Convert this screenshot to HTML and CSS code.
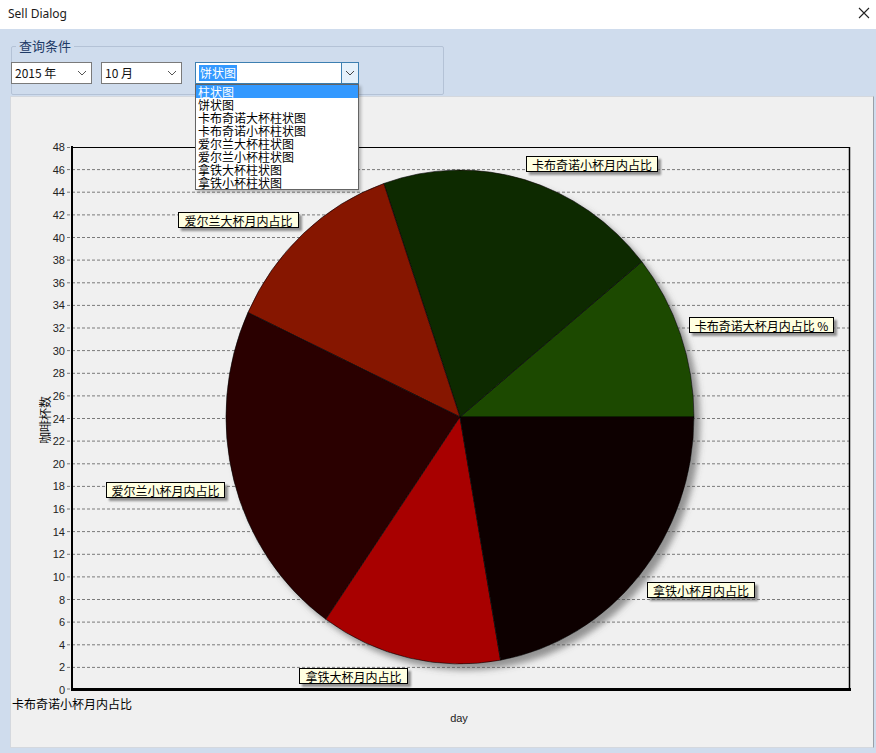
FILE: index.html
```html
<!DOCTYPE html>
<html>
<head>
<meta charset="utf-8">
<title>Sell Dialog</title>
<link rel="stylesheet" href="styles.css">
</head>
<body>
<div class="window">
  <div class="titlebar">
    <span class="title">Sell Dialog</span>
    <svg class="close" width="12" height="12" viewBox="0 0 12 12"><path d="M1 1 L11 11 M11 1 L1 11" stroke="#222" stroke-width="1.1" fill="none"/></svg>
  </div>
  <fieldset class="query">
    <legend class="legend">查询条件</legend>
    <div class="row">
      <div class="combo c-year"><span class="ctext">2015 年</span><svg class="chev" width="10" height="6" viewBox="0 0 10 6"><path d="M1 1 L5 5 L9 1" stroke="#555" fill="none"/></svg></div>
      <div class="combo c-month"><span class="ctext">10 月</span><svg class="chev" width="10" height="6" viewBox="0 0 10 6"><path d="M1 1 L5 5 L9 1" stroke="#555" fill="none"/></svg></div>
      <div class="combo c-type">
        <span class="ctext"><span class="sel">饼状图</span></span>
        <span class="btn"><svg width="10" height="6" viewBox="0 0 10 6"><path d="M1 1 L5 5 L9 1" stroke="#444" fill="none"/></svg></span>
        <ul class="list">
          <li class="hl">柱状图</li>
          <li>饼状图</li>
          <li>卡布奇诺大杯柱状图</li>
          <li>卡布奇诺小杯柱状图</li>
          <li>爱尔兰大杯柱状图</li>
          <li>爱尔兰小杯柱状图</li>
          <li>拿铁大杯柱状图</li>
          <li>拿铁小杯柱状图</li>
        </ul>
      </div>
    </div>
  </fieldset>
  <div class="panel">
    <svg class="chart" width="862" height="650" viewBox="11 97 862 650">
      <defs>
        <filter id="pshadow" x="-10%" y="-10%" width="130%" height="130%">
          <feDropShadow dx="6" dy="6" stdDeviation="3" flood-color="#555" flood-opacity="0.6"/>
        </filter>
        <filter id="lshadow" x="-10%" y="-30%" width="130%" height="180%">
          <feDropShadow dx="3" dy="3" stdDeviation="1" flood-color="#666" flood-opacity="0.7"/>
        </filter>
      </defs>
      <g class="grid">
        <line x1="67" x2="849" y1="169.6" y2="169.6"/>
        <line x1="67" x2="849" y1="192.2" y2="192.2"/>
        <line x1="67" x2="849" y1="214.9" y2="214.9"/>
        <line x1="67" x2="849" y1="237.5" y2="237.5"/>
        <line x1="67" x2="849" y1="260.1" y2="260.1"/>
        <line x1="67" x2="849" y1="282.8" y2="282.8"/>
        <line x1="67" x2="849" y1="305.4" y2="305.4"/>
        <line x1="67" x2="849" y1="328" y2="328"/>
        <line x1="67" x2="849" y1="350.6" y2="350.6"/>
        <line x1="67" x2="849" y1="373.3" y2="373.3"/>
        <line x1="67" x2="849" y1="395.9" y2="395.9"/>
        <line x1="67" x2="849" y1="418.5" y2="418.5"/>
        <line x1="67" x2="849" y1="441.1" y2="441.1"/>
        <line x1="67" x2="849" y1="463.8" y2="463.8"/>
        <line x1="67" x2="849" y1="486.4" y2="486.4"/>
        <line x1="67" x2="849" y1="509" y2="509"/>
        <line x1="67" x2="849" y1="531.6" y2="531.6"/>
        <line x1="67" x2="849" y1="554.3" y2="554.3"/>
        <line x1="67" x2="849" y1="576.9" y2="576.9"/>
        <line x1="67" x2="849" y1="599.5" y2="599.5"/>
        <line x1="67" x2="849" y1="622.1" y2="622.1"/>
        <line x1="67" x2="849" y1="644.8" y2="644.8"/>
        <line x1="67" x2="849" y1="667.4" y2="667.4"/>
        <line x1="67" x2="72" y1="147.5" y2="147.5"/>
        <line x1="67" x2="72" y1="689" y2="689"/>
      </g>
      <g class="ticks">
        <text x="65" y="151">48</text>
        <text x="65" y="173.6">46</text>
        <text x="65" y="196.2">44</text>
        <text x="65" y="218.9">42</text>
        <text x="65" y="241.5">40</text>
        <text x="65" y="264.1">38</text>
        <text x="65" y="286.8">36</text>
        <text x="65" y="309.4">34</text>
        <text x="65" y="332">32</text>
        <text x="65" y="354.6">30</text>
        <text x="65" y="377.3">28</text>
        <text x="65" y="399.9">26</text>
        <text x="65" y="422.5">24</text>
        <text x="65" y="445.1">22</text>
        <text x="65" y="467.8">20</text>
        <text x="65" y="490.4">18</text>
        <text x="65" y="513">16</text>
        <text x="65" y="535.6">14</text>
        <text x="65" y="558.3">12</text>
        <text x="65" y="580.9">10</text>
        <text x="65" y="603.5">8</text>
        <text x="65" y="626.1">6</text>
        <text x="65" y="648.8">4</text>
        <text x="65" y="671.4">2</text>
        <text x="65" y="694">0</text>
      </g>
      <line x1="72" y1="147.5" x2="850" y2="147.5" stroke="#000" stroke-width="1"/>
      <line x1="849.5" y1="147" x2="849.5" y2="690" stroke="#000" stroke-width="1.5"/>
      <g class="pie" filter="url(#pshadow)">
        <path d="M460 417 L694 417 A234 247 0 0 0 641.8 261.6 Z" fill="#1e4a00"/>
        <path d="M460 417 L641.8 261.6 A234 247 0 0 0 383.8 183.5 Z" fill="#102a00"/>
        <path d="M460 417 L383.8 183.5 A234 247 0 0 0 247.9 312.6 Z" fill="#861400"/>
        <path d="M460 417 L247.9 312.6 A234 247 0 0 0 325.8 619.3 Z" fill="#2b0000"/>
        <path d="M460 417 L325.8 619.3 A234 247 0 0 0 500.6 660.2 Z" fill="#a80000"/>
        <path d="M460 417 L500.6 660.2 A234 247 0 0 0 694 417 Z" fill="#0a0000"/>
      </g>
      <line x1="72" y1="146" x2="72" y2="691" stroke="#000" stroke-width="2"/>
      <line x1="71" y1="689.5" x2="851" y2="689.5" stroke="#000" stroke-width="3"/>
      <g class="callouts">
        <rect x="526.5" y="156.5" width="131" height="15" filter="url(#lshadow)"/>
        <text x="592" y="164.5">卡布奇诺小杯月内占比</text>
        <rect x="689.5" y="317.5" width="144" height="15" filter="url(#lshadow)"/>
        <text x="761.5" y="325.5">卡布奇诺大杯月内占比 %</text>
        <rect x="178.5" y="212.5" width="120" height="15" filter="url(#lshadow)"/>
        <text x="238.5" y="220.5">爱尔兰大杯月内占比</text>
        <rect x="106.5" y="482.5" width="118" height="15" filter="url(#lshadow)"/>
        <text x="165.5" y="490.5">爱尔兰小杯月内占比</text>
        <rect x="299.5" y="668.5" width="108" height="15" filter="url(#lshadow)"/>
        <text x="353.5" y="676.5">拿铁大杯月内占比</text>
        <rect x="647.5" y="582.5" width="107" height="15" filter="url(#lshadow)"/>
        <text x="701" y="590.5">拿铁小杯月内占比</text>
      </g>
      <text class="ylabel" x="44" y="420" transform="rotate(-90 44 420)">咖啡杯数</text>
      <text class="xlabel" x="459" y="722">day</text>
      <text class="legendtxt" x="12" y="709">卡布奇诺小杯月内占比</text>
    </svg>
  </div>
</div>
</body>
</html>
```

FILE: styles.css
```css
html, body {
  margin: 0;
  padding: 0;
}
body {
  width: 876px;
  height: 753px;
  overflow: hidden;
  background: #cfdced;
  font-family: "Noto Sans CJK SC", "Noto Sans", sans-serif;
}
.window {
  display: flex;
  flex-direction: column;
  width: 876px;
  height: 753px;
}
.titlebar {
  height: 29px;
  flex: none;
  background: #ffffff;
  display: flex;
  align-items: center;
  justify-content: space-between;
  padding: 0 6px 0 8px;
  box-sizing: border-box;
}
.title {
  font-family: "Noto Sans", "Open Sans", sans-serif;
  font-size: 12px;
  color: #1a1a1a;
  margin-top: -2px;
}
.close {
  margin-top: -4px;
}
.query {
  margin: 9px 0 0 11px;
  width: 433px;
  box-sizing: border-box;
  padding: 8px 0 10px 0;
  border: 1px solid #b4c2d6;
  border-radius: 2px;
  min-inline-size: 0;
}
.legend {
  font-size: 13px;
  line-height: 16px;
  color: #1e3a66;
  padding: 0 3px;
  margin-left: 4px;
}
.row {
  display: flex;
  margin-left: -1px;
}
.combo {
  position: relative;
  height: 22px;
  box-sizing: border-box;
  background: #fff;
  border: 1px solid #7a7a7a;
  display: flex;
  align-items: center;
  font-size: 12px;
  color: #111;
}
.c-year { width: 81px; }
.c-month { width: 81px; margin-left: 9px; }
.c-type { width: 164px; margin-left: 13px; border-color: #3c7fb1; }
.ctext {
  flex: 1;
  padding-left: 3px;
  line-height: 20px;
}
.chev { margin-right: 4px; }
.sel {
  background: #3399ff;
  color: #fff;
  padding: 0 1px;
  line-height: 16px;
  display: inline-block;
}
.btn {
  width: 16px;
  height: 20px;
  border-left: 1px solid #3c7fb1;
  display: flex;
  align-items: center;
  justify-content: center;
  background: #e5f1fb;
}
.list {
  position: absolute;
  top: 21px;
  left: -1px;
  width: 164px;
  box-sizing: border-box;
  margin: 0;
  padding: 0;
  list-style: none;
  background: #fff;
  border: 1px solid #646464;
  box-shadow: 2px 2px 3px rgba(0,0,0,0.25);
  z-index: 5;
}
.list li {
  font-size: 12px;
  line-height: 13px;
  height: 13px;
  padding-left: 2px;
  color: #000;
  white-space: nowrap;
}
.list li.hl {
  background: #3399ff;
  color: #fff;
}
.panel {
  margin: 1px 0 0 10px;
  width: 864px;
  height: 652px;
  box-sizing: border-box;
  background: #f0f0f0;
  border: 1px solid #d4d8de;
  border-right-color: #9aa0a8;
  flex: none;
}
.chart {
  display: block;
}
.grid line {
  stroke: #7a7a7a;
  stroke-width: 1;
  stroke-dasharray: 3 2;
}
.ticks text {
  font-family: "Liberation Sans", Arial, sans-serif;
  font-size: 11px;
  fill: #222;
  text-anchor: end;
}
.pie path {
  stroke: #000;
  stroke-width: 0.6;
}
.callouts rect {
  fill: #ffffe1;
  stroke: #000;
  stroke-width: 1;
}
.callouts text {
  font-family: "Noto Sans CJK SC", sans-serif;
  font-size: 12px;
  fill: #000;
  text-anchor: middle;
  dominant-baseline: central;
}
.ylabel {
  font-family: "Noto Sans CJK SC", sans-serif;
  font-size: 12px;
  fill: #111;
  text-anchor: middle;
  dominant-baseline: central;
}
.xlabel {
  font-family: "Liberation Sans", Arial, sans-serif;
  font-size: 11px;
  fill: #222;
  text-anchor: middle;
}
.legendtxt {
  font-family: "Noto Sans CJK SC", sans-serif;
  font-size: 12px;
  fill: #000;
}
```
